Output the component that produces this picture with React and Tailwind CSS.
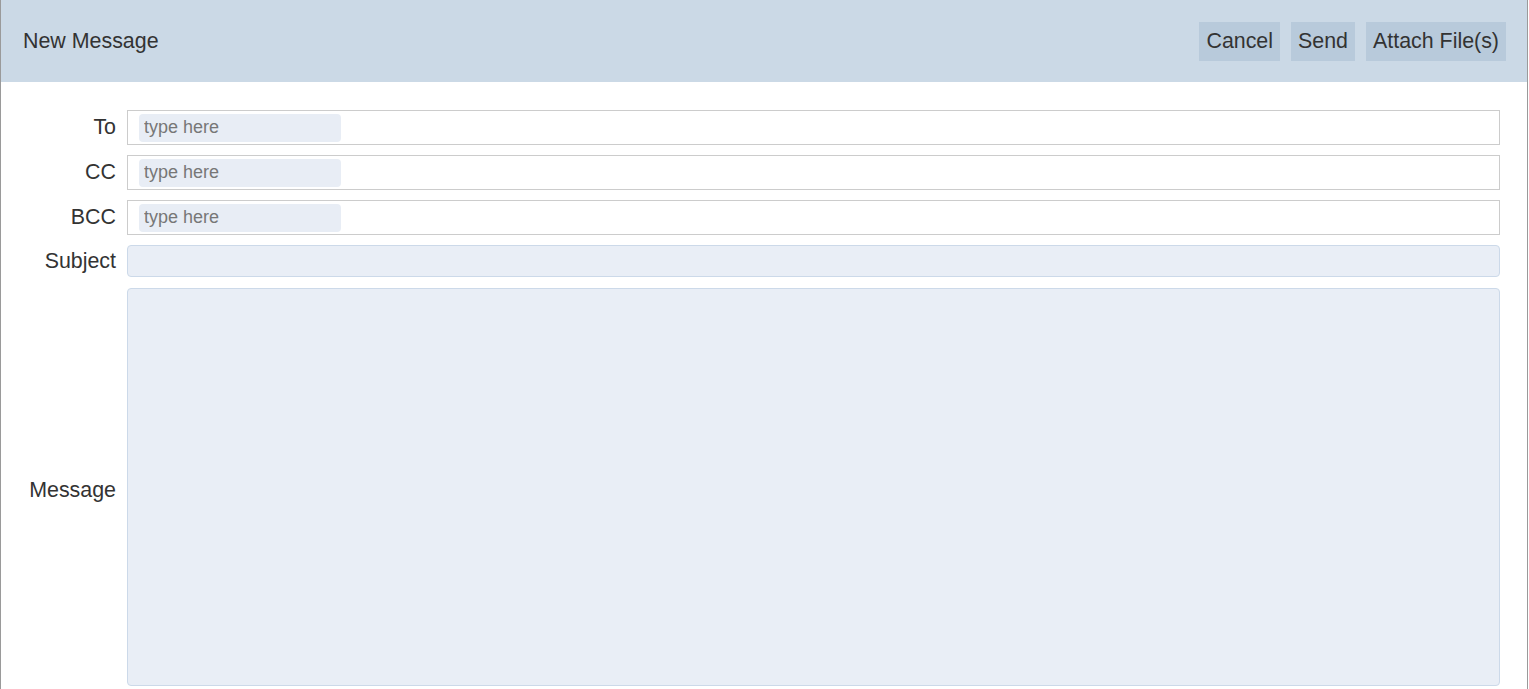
const FONT = "font-['Liberation_Sans',Arial,sans-serif]";

function RecipientRow({ label }) {
  return (
    <div className="flex items-center">
      <label className="w-[115px] shrink-0 text-right text-[21.4px] text-[#333]">{label}</label>
      <div className="ml-[11px] flex h-[35px] flex-1 items-center border border-[#cccccc] bg-white pl-[11px]">
        <input
          type="text"
          placeholder="type here"
          className="h-[28px] w-[202px] rounded-[4px] bg-[#e8edf5] px-[5px] text-[18px] text-[#333] outline-none placeholder:text-[#777]"
        />
      </div>
    </div>
  );
}

export default function App() {
  return (
    <div className={`${FONT} h-[689px] w-[1529px] bg-white`}>
      <div className="flex h-[689px] w-[1528px] flex-col border-x border-[#9a9a9a] bg-white">
        {/* Header */}
        <div className="flex h-[82px] shrink-0 items-center justify-between bg-[#cbd9e6] pl-[22px] pr-[21px]">
          <h1 className="text-[21.4px] text-[#333]">New Message</h1>
          <div className="flex gap-[11px]">
            {['Cancel', 'Send', 'Attach File(s)'].map((b) => (
              <button
                key={b}
                className="flex h-[39px] items-center bg-[#b8cadb] px-[7px] text-[21.4px] text-[#333]"
              >
                {b}
              </button>
            ))}
          </div>
        </div>

        {/* Form */}
        <div className="flex flex-1 flex-col pt-[28px] pr-[27px]">
          <div className="flex flex-col gap-[10px]">
            <RecipientRow label="To" />
            <RecipientRow label="CC" />
            <RecipientRow label="BCC" />
          </div>

          <div className="mt-[10px] flex items-center">
            <label className="w-[115px] shrink-0 text-right text-[21.4px] text-[#333]">Subject</label>
            <input
              type="text"
              className="ml-[11px] h-[32px] flex-1 rounded-[4px] border border-[#ccd9e9] bg-[#e9eef6] px-2 text-[18px] text-[#333] outline-none"
            />
          </div>

          <div className="mt-[11px] flex items-center">
            <label className="mt-[6px] w-[115px] shrink-0 text-right text-[21.4px] text-[#333]">Message</label>
            <textarea className="ml-[11px] h-[398px] flex-1 resize-none rounded-[4px] border border-[#ccd9e9] bg-[#e9eef6] p-2 text-[18px] text-[#333] outline-none" />
          </div>
        </div>
      </div>
    </div>
  );
}
